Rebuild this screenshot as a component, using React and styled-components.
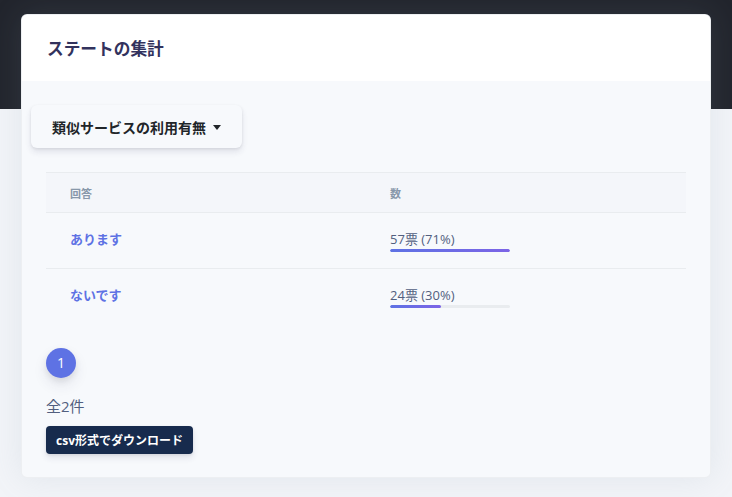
import React from "react";
import styled, { createGlobalStyle } from "styled-components";

const Global = createGlobalStyle`
  html, body { margin: 0; padding: 0; }
  body {
    font-family: "Open Sans", "Noto Sans CJK JP", sans-serif;
    background: #f2f4f8;
  }
  * { box-sizing: border-box; }
`;

const Page = styled.div`
  min-height: 497px;
  padding: 14px 21px 20px;
  background: linear-gradient(to bottom, #22252d 0, #22252d 109px, #f2f4f8 109px, #f2f4f8 100%);
`;

const Card = styled.div`
  width: 690px;
  background: #f7f9fc;
  border-radius: 6px;
  box-shadow: 0 0 2rem 0 rgba(136, 152, 170, 0.15);
  border: 1px solid rgba(0, 0, 0, 0.04);
  overflow: hidden;
`;

const CardHeader = styled.div`
  height: 66px;
  background: #fff;
  display: flex;
  align-items: center;
  padding: 0 25px;
`;

const Title = styled.h3`
  margin: 0;
  font-size: 16.7px;
  font-weight: 600;
  color: #32325d;
`;

const CardBody = styled.div`
  padding: 24px 24px 23px 24px;
`;

const Dropdown = styled.button`
  margin-left: -15px;
  height: 43px;
  display: inline-flex;
  align-items: center;
  gap: 7px;
  padding: 0 21px 0 21px;
  border: none;
  border-radius: 6px;
  background: #f7f9fc;
  box-shadow: 0 4px 6px rgba(50, 50, 93, 0.11), 0 1px 3px rgba(0, 0, 0, 0.08);
  font-family: inherit;
  font-size: 14px;
  font-weight: 700;
  color: #212529;
`;

const Caret = styled.span`
  width: 0;
  height: 0;
  border-left: 4.5px solid transparent;
  border-right: 4.5px solid transparent;
  border-top: 5px solid #212529;
  margin-top: 1px;
`;

const Table = styled.table`
  margin-top: 24px;
  width: 100%;
  border-collapse: collapse;
  table-layout: fixed;
`;

const HeadCell = styled.th`
  height: 40px;
  padding: 0 24px;
  text-align: left;
  font-size: 11px;
  font-weight: 600;
  color: #8898aa;
  background: #f4f6fa;
  border-top: 1px solid #e9ecef;
  border-bottom: 1px solid #e9ecef;
`;

const Cell = styled.td`
  height: 56px;
  padding: ${(p) => (p.$label ? "0 24px 5px" : "2px 24px 0")};
  vertical-align: middle;
  border-bottom: ${(p) => (p.$last ? "none" : "1px solid #e9ecef")};
`;

const Answer = styled.span`
  font-size: 13px;
  font-weight: 700;
  color: #5e72e4;
`;

const Count = styled.div`
  font-size: 13px;
  color: #525f7f;
  line-height: 16px;
`;

const Track = styled.div`
  width: 120px;
  height: 3px;
  margin-top: 2px;
  border-radius: 2px;
  background: #e9ecef;
  overflow: hidden;
`;

const Fill = styled.div`
  height: 100%;
  border-radius: 2px;
  background: linear-gradient(87deg, #5e72e4 0, #7c64e6 100%);
`;

const Footer = styled.div`
  margin-top: 23px;
  display: flex;
  flex-direction: column;
  align-items: flex-start;
`;

const PageDot = styled.span`
  width: 30px;
  height: 30px;
  border-radius: 50%;
  background: #5e72e4;
  color: #fff;
  font-size: 14px;
  display: flex;
  align-items: center;
  justify-content: center;
  box-shadow: 0 7px 14px rgba(50, 50, 93, 0.1), 0 3px 6px rgba(0, 0, 0, 0.08);
`;

const Total = styled.div`
  margin-top: 18px;
  font-size: 15px;
  color: #525f7f;
  line-height: 20px;
`;

const CsvButton = styled.button`
  margin-top: 10px;
  height: 28px;
  padding: 0 10px;
  border: none;
  border-radius: 4px;
  background: #172b4d;
  color: #fff;
  font-family: inherit;
  font-size: 12px;
  font-weight: 700;
  box-shadow: 0 4px 6px rgba(50, 50, 93, 0.11), 0 1px 3px rgba(0, 0, 0, 0.08);
`;

const rows = [
  { label: "あります", count: 57, pct: 71 },
  { label: "ないです", count: 24, pct: 30 },
];

export default function App() {
  const max = Math.max(...rows.map((r) => r.count));
  return (
    <>
      <Global />
      <Page>
        <Card>
          <CardHeader>
            <Title>ステートの集計</Title>
          </CardHeader>
          <CardBody>
            <Dropdown>
              類似サービスの利用有無
              <Caret />
            </Dropdown>
            <Table>
              <thead>
                <tr>
                  <HeadCell>回答</HeadCell>
                  <HeadCell>数</HeadCell>
                </tr>
              </thead>
              <tbody>
                {rows.map((r, i) => (
                  <tr key={r.label}>
                    <Cell $label $last={i === rows.length - 1}>
                      <Answer>{r.label}</Answer>
                    </Cell>
                    <Cell $last={i === rows.length - 1}>
                      <Count>
                        {r.count}票 ({r.pct}%)
                      </Count>
                      <Track>
                        <Fill style={{ width: `${(r.count / max) * 100}%` }} />
                      </Track>
                    </Cell>
                  </tr>
                ))}
              </tbody>
            </Table>
            <Footer>
              <PageDot>1</PageDot>
              <Total>全2件</Total>
              <CsvButton>csv形式でダウンロード</CsvButton>
            </Footer>
          </CardBody>
        </Card>
      </Page>
    </>
  );
}
